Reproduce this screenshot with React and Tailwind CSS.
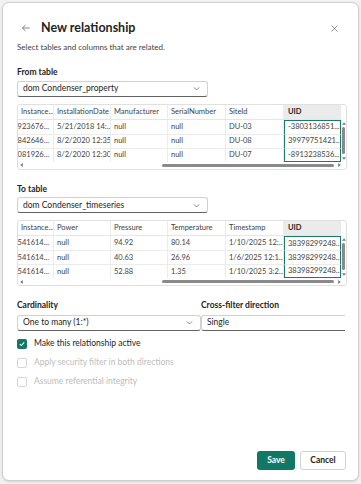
import React from 'react';

const font = { fontFamily: 'Lato, "Open Sans", sans-serif' };

const fromCols = ['Instance...', 'InstallationDate', 'Manufacturer', 'SerialNumber', 'SiteId', 'UID'];
const fromRows = [
  ['923676...', '5/21/2018 14:...', 'null', 'null', 'DU-03', '-3803136851...'],
  ['842646...', '8/2/2020 12:35', 'null', 'null', 'DU-08', '39979751421...'],
  ['081926...', '8/2/2020 12:30', 'null', 'null', 'DU-07', '-8913238536...'],
];

const toCols = ['Instance...', 'Power', 'Pressure', 'Temperature', 'Timestamp', 'UID'];
const toRows = [
  ['541614...', 'null', '94.92', '80.14', '1/10/2025 12:...', '38398299248...'],
  ['541614...', 'null', '40.63', '26.96', '1/6/2025 12:1...', '38398299248...'],
  ['541614...', 'null', '52.88', '1.35', '1/10/2025 3:2...', '38398299248...'],
];

const widths = ['w-[36px]', 'w-[57px]', 'w-[57px]', 'w-[58px]', 'w-[58px]', 'w-[57px]'];

const Chevron = ({ className = '' }) => (
  <svg viewBox="0 0 12 12" className={`w-[9px] h-[9px] ${className}`} fill="none" stroke="#616161" strokeWidth="1">
    <path d="M2.5 4.5 L6 8 L9.5 4.5" />
  </svg>
);

const Dropdown = ({ label, className = '', chevron = true, openRight = false }) => (
  <div
    className={`h-[16px] flex items-center justify-between pl-[5px] pr-[6px] bg-white border border-[#d1d1d1] border-b-[#616161] ${openRight ? 'border-r-0 rounded-l-[3px]' : 'rounded-[3px]'} ${className}`}
  >
    <span className="text-[8.5px] text-[#242424] leading-none">{label}</span>
    {chevron && <Chevron />}
  </div>
);

const Preview = ({ cols, rows }) => (
  <div className="mt-[7px] w-[330px] border border-[#e0e0e0] rounded-[3px] bg-white overflow-hidden">
    <div className="flex">
      <div className="flex flex-col">
        <div className="flex h-[15px] border-b border-[#e6e6e6]">
          {cols.map((c, i) => (
            <div
              key={c}
              className={`${widths[i]} flex items-center text-[7.5px] leading-none whitespace-nowrap overflow-hidden ${i === 5 ? 'bg-[#ebebeb] font-bold text-[#242424] pl-[4px]' : 'text-[#424242] border-r border-[#ececec] pl-[3px]'} ${i === 0 ? 'pl-0' : ''}`}
            >
              {c}
            </div>
          ))}
        </div>
        {rows.map((r, ri) => (
          <div key={ri} className="flex h-[14px]">
            {r.map((v, i) => (
              <div
                key={i}
                className={`${widths[i]} flex items-center whitespace-nowrap overflow-hidden text-[7.5px] leading-none text-[#424242] ${
                  i === 5
                    ? `pl-[3px] border-x-[1.5px] border-[#1b7a65] ${ri === 0 ? 'border-t-[1.5px]' : 'border-t border-t-[#ececec]'} ${ri === rows.length - 1 ? 'border-b-[1.5px]' : ''}`
                    : `pl-[3px] border-r border-[#ececec] ${ri > 0 ? 'border-t border-[#ececec]' : ''} ${i === 0 ? 'justify-end pr-[4px] pl-0' : ''}`
                }`}
              >
                {v}
              </div>
            ))}
          </div>
        ))}
      </div>
      <div className="w-[6px] flex flex-col">
        <div className="h-[15px]" />
        <div className="flex-1 flex flex-col items-center overflow-hidden">
          <svg viewBox="0 0 6 4" className="w-[4px] h-[3px] mt-[2px]" fill="#7a7a7a"><path d="M0 4 L3 0 L6 4 Z" /></svg>
          <div className="w-[3px] h-[27px] bg-[#8a8a8a] rounded-full mt-[2px]" />
          <div className="flex-1" />
          <svg viewBox="0 0 6 4" className="w-[4px] h-[3px] mb-[2px]" fill="#7a7a7a"><path d="M0 0 L3 4 L6 0 Z" /></svg>
        </div>
      </div>
    </div>
    <div className="h-[7px] flex items-center">
      <svg viewBox="0 0 4 6" className="w-[3px] h-[4px] ml-[2px]" fill="#7a7a7a"><path d="M4 0 L0 3 L4 6 Z" /></svg>
      <div className="w-[139px]" />
      <div className="w-[172px] h-[3px] bg-[#8a8a8a] rounded-full" />
      <svg viewBox="0 0 4 6" className="w-[3px] h-[4px] ml-[4px]" fill="#7a7a7a"><path d="M0 0 L4 3 L0 6 Z" /></svg>
    </div>
  </div>
);

const CheckBox = ({ checked, label }) => (
  <div className="flex items-center h-[10px]">
    <div
      className={`w-[10px] h-[10px] rounded-[2px] flex items-center justify-center ${checked ? 'bg-[#117865]' : 'border border-[#d6d6d6] bg-white'}`}
    >
      {checked && (
        <svg viewBox="0 0 10 10" className="w-[8px] h-[8px]" fill="none" stroke="white" strokeWidth="1.3">
          <path d="M2.2 5.2 L4.2 7 L7.8 3" />
        </svg>
      )}
    </div>
    <span className={`ml-[7px] text-[8.5px] leading-none ${checked ? 'text-[#242424]' : 'text-[#bdbdbd]'}`}>{label}</span>
  </div>
);

export default function App() {
  return (
    <div className="w-[361px] h-[484px] bg-[#f2f2f2] pt-[2px] pl-[2px]" style={font}>
      <div className="w-[357px] h-[479px] bg-white border border-[#cfcfcf] rounded-[7px] shadow-sm flex flex-col px-[14px]">
        {/* header */}
        <div className="flex items-center h-[18px] mt-[16px]">
          <svg viewBox="0 0 12 12" className="w-[10px] h-[10px] ml-[4px]" fill="none" stroke="#616161" strokeWidth="0.9">
            <path d="M10.5 6 H1.8 M5.5 2.2 L1.8 6 L5.5 9.8" />
          </svg>
          <span className="ml-[10px] text-[12.5px] font-bold text-[#242424] leading-none">New relationship</span>
          <div className="flex-1" />
          <svg viewBox="0 0 12 12" className="w-[9px] h-[9px] mr-[5px]" fill="none" stroke="#616161" strokeWidth="0.9">
            <path d="M2 2 L10 10 M10 2 L2 10" />
          </svg>
        </div>
        <div className="mt-[6px] text-[8px] text-[#424242] leading-none">Select tables and columns that are related.</div>

        <div className="mt-[17px] text-[8.5px] font-bold text-[#242424] leading-none">From table</div>
        <Dropdown label="dom Condenser_property" className="w-[191px] mt-[4px]" />
        <Preview cols={fromCols} rows={fromRows} />

        <div className="mt-[15px] text-[8.5px] font-bold text-[#242424] leading-none">To table</div>
        <Dropdown label="dom Condenser_timeseries" className="w-[191px] mt-[4px]" />
        <Preview cols={toCols} rows={toRows} />

        <div className="mt-[15px] flex">
          <div className="w-[186px] flex flex-col">
            <div className="text-[8.5px] font-bold text-[#242424] leading-none">Cardinality</div>
            <Dropdown label="One to many (1:*)" className="w-[184px] mt-[5px]" />
          </div>
          <div className="flex flex-col">
            <div className="text-[8.5px] font-bold text-[#242424] leading-none">Cross-filter direction</div>
            <Dropdown label="Single" className="w-[144px] mt-[5px]" chevron={false} openRight />
          </div>
        </div>

        <div className="mt-[8px] flex flex-col gap-[9px]">
          <CheckBox checked label="Make this relationship active" />
          <CheckBox label="Apply security filter in both directions" />
          <CheckBox label="Assume referential integrity" />
        </div>

        <div className="flex-1" />
        <div className="flex justify-end gap-[5px] mb-[10px] mr-[-2px]">
          <button className="w-[38px] h-[19px] rounded-[3px] bg-[#117865] text-white text-[8.5px] font-bold leading-none">Save</button>
          <button className="w-[46px] h-[19px] rounded-[3px] bg-white border border-[#d1d1d1] text-[#242424] text-[8.5px] font-bold leading-none">Cancel</button>
        </div>
      </div>
    </div>
  );
}
